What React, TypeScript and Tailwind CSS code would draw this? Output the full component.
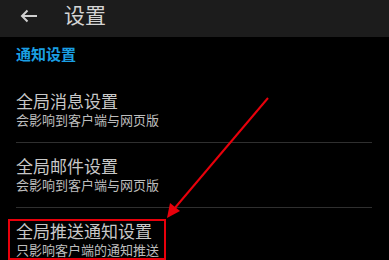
import React from 'react'

const items = [
  { title: '全局消息设置', sub: '会影响到客户端与网页版' },
  { title: '全局邮件设置', sub: '会影响到客户端与网页版' },
  { title: '全局推送通知设置', sub: '只影响客户端的通知推送' },
]

export default function App() {
  return (
    <div
      className="relative w-[389px] h-[260px] overflow-hidden bg-black"
      style={{ fontFamily: '"Noto Sans CJK SC", "Noto Sans", sans-serif' }}
    >
      {/* Header */}
      <div className="flex items-center h-[37px] bg-[#1c1c1c] pb-[10px]">
        <svg width="18" height="14" viewBox="0 0 18 14" className="ml-[20px] mt-[4px]" fill="none">
          <path d="M17 7H2M7.5 1.5L2 7l5.5 5.5" stroke="#cfcfcf" strokeWidth="2" />
        </svg>
        <div className="ml-[26px] text-[21px] leading-[24px] text-[#d4d4d4]">设置</div>
      </div>

      {/* Section heading */}
      <div className="pl-[16px] pt-[7px] pb-[15px] text-[15px] leading-[19px] font-bold text-[#1a9fe3]">
        通知设置
      </div>

      {/* Items */}
      <div className="flex flex-col">
        {items.map((item, i) => (
          <div key={i} className="flex flex-col">
            <div className="pl-[16px] pt-[13px] pb-[14px]">
              <div className="text-[17px] leading-[20px] text-[#c8c8c8]">{item.title}</div>
              <div className="text-[13px] leading-[17px] text-[#bdbdbd]">{item.sub}</div>
            </div>
            <div className="ml-[16px] w-[356px] h-px bg-[#2f2f2f]" />
          </div>
        ))}
      </div>

      {/* Annotation box */}
      <div className="absolute left-[8px] top-[219px] w-[158px] h-[41px] border-2 border-[#e8000b]" />

      {/* Annotation arrow */}
      <svg className="absolute left-0 top-0" width="389" height="260" viewBox="0 0 389 260">
        <line x1="268" y1="98" x2="174" y2="209" stroke="#e8000b" strokeWidth="2" />
        <polygon points="167,218 170,203 180,211" fill="#e8000b" />
      </svg>
    </div>
  )
}
